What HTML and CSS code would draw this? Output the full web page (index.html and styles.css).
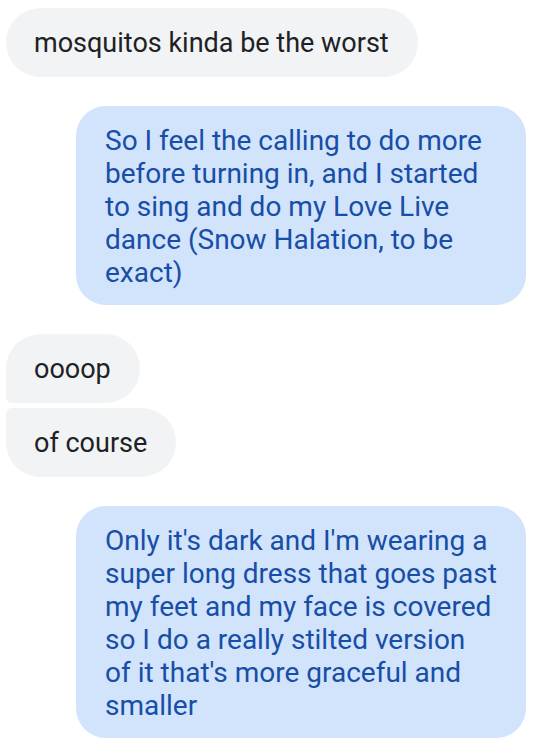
FILE: index.html
```html
<!DOCTYPE html>
<html>
<head>
<meta charset="utf-8">
<link rel="stylesheet" href="styles.css">
</head>
<body>
<div class="thread">
  <div class="msg in single">mosquitos kinda be the worst</div>
  <div class="msg out">So I feel the calling to do more<br>before turning in, and I started<br>to sing and do my Love Live<br>dance (Snow Halation, to be<br>exact)</div>
  <div class="group">
    <div class="msg in first">oooop</div>
    <div class="msg in last">of course</div>
  </div>
  <div class="msg out">Only it's dark and I'm wearing a<br>super long dress that goes past<br>my feet and my face is covered<br>so I do a really stilted version<br>of it that's more graceful and<br>smaller</div>
</div>
</body>
</html>
```
FILE: styles.css
```css
html, body {
  margin: 0;
  padding: 0;
  background: #ffffff;
}
.thread {
  display: flex;
  flex-direction: column;
  gap: 29px;
  padding: 8px 14px 0 6px;
  font-family: Roboto, "Noto Sans", sans-serif;
  font-size: 27px;
  line-height: 33px;
}
.group {
  display: flex;
  flex-direction: column;
  align-items: flex-start;
  gap: 5px;
}
.msg {
  box-sizing: border-box;
  padding: 19px 29px 17px 28px;
}
.in {
  align-self: flex-start;
  background: #f1f3f4;
  color: #202124;
  border-radius: 35px;
}
.in.first {
  border-radius: 35px 35px 35px 6px;
}
.in.last {
  border-radius: 6px 35px 35px 35px;
}
.out {
  align-self: flex-end;
  width: 450px;
  background: #d2e3fc;
  color: #174ea6;
  border-radius: 30px;
  font-size: 28px;
  padding: 18px 20px 16px 29px;
}
```
